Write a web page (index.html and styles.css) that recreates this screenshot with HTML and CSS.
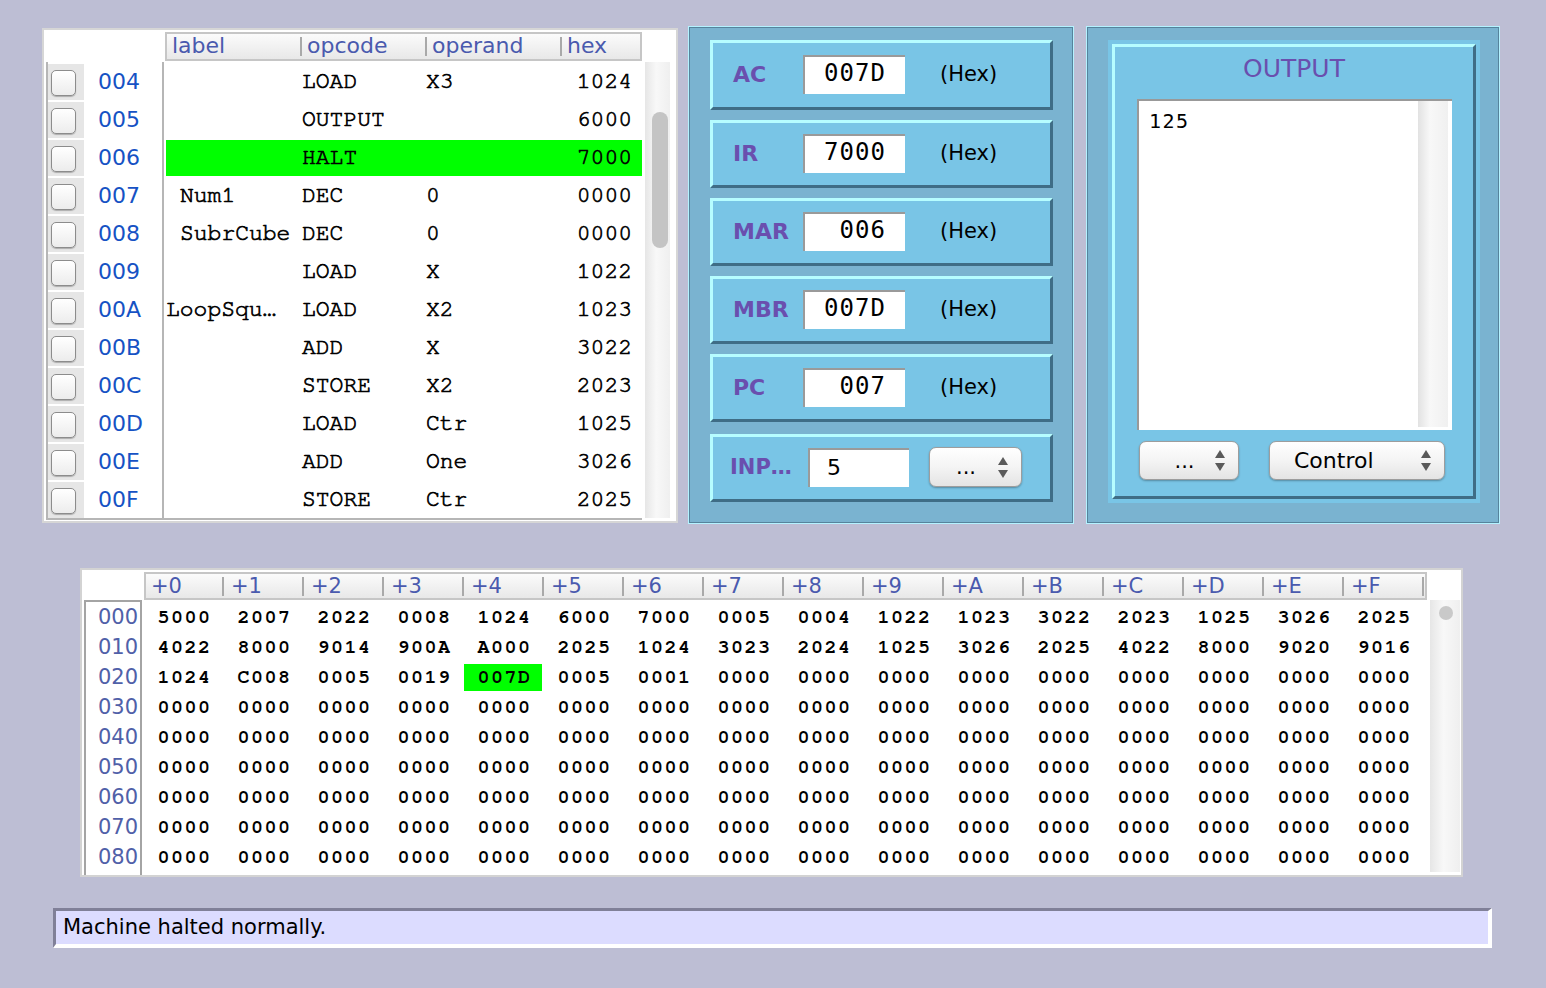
FILE: index.html
```html
<!DOCTYPE html>
<html>
<head>
<meta charset="utf-8">
<link rel="stylesheet" href="styles.css">
</head>
<body>
<div class="app">
  <div class="top">
    <section class="prog">
      <div class="prog-head">
        <div class="prog-head-spacer"></div>
        <div class="thead">
          <div class="th th-label">label</div>
          <div class="th th-op">opcode</div>
          <div class="th th-arg">operand</div>
          <div class="th th-hex">hex</div>
        </div>
      </div>
      <div class="prog-body">
        <div class="rows">
          <div class="row"><div class="chk"><span class="box"></span></div><div class="addr">004</div><div class="cells"><div class="cells-in"><div class="c-label"></div><div class="c-op">LOAD</div><div class="c-arg">X3</div><div class="c-hex">1024</div></div></div></div>
          <div class="row"><div class="chk"><span class="box"></span></div><div class="addr">005</div><div class="cells"><div class="cells-in"><div class="c-label"></div><div class="c-op">OUTPUT</div><div class="c-arg"></div><div class="c-hex">6000</div></div></div></div>
          <div class="row"><div class="chk"><span class="box"></span></div><div class="addr">006</div><div class="cells"><div class="cells-in hi"><div class="c-label"></div><div class="c-op">HALT</div><div class="c-arg"></div><div class="c-hex">7000</div></div></div></div>
          <div class="row"><div class="chk"><span class="box"></span></div><div class="addr">007</div><div class="cells"><div class="cells-in"><div class="c-label">Num1</div><div class="c-op">DEC</div><div class="c-arg">0</div><div class="c-hex">0000</div></div></div></div>
          <div class="row"><div class="chk"><span class="box"></span></div><div class="addr">008</div><div class="cells"><div class="cells-in"><div class="c-label">SubrCube</div><div class="c-op">DEC</div><div class="c-arg">0</div><div class="c-hex">0000</div></div></div></div>
          <div class="row"><div class="chk"><span class="box"></span></div><div class="addr">009</div><div class="cells"><div class="cells-in"><div class="c-label"></div><div class="c-op">LOAD</div><div class="c-arg">X</div><div class="c-hex">1022</div></div></div></div>
          <div class="row"><div class="chk"><span class="box"></span></div><div class="addr">00A</div><div class="cells"><div class="cells-in"><div class="c-label c-label-trunc">LoopSqu…</div><div class="c-op">LOAD</div><div class="c-arg">X2</div><div class="c-hex">1023</div></div></div></div>
          <div class="row"><div class="chk"><span class="box"></span></div><div class="addr">00B</div><div class="cells"><div class="cells-in"><div class="c-label"></div><div class="c-op">ADD</div><div class="c-arg">X</div><div class="c-hex">3022</div></div></div></div>
          <div class="row"><div class="chk"><span class="box"></span></div><div class="addr">00C</div><div class="cells"><div class="cells-in"><div class="c-label"></div><div class="c-op">STORE</div><div class="c-arg">X2</div><div class="c-hex">2023</div></div></div></div>
          <div class="row"><div class="chk"><span class="box"></span></div><div class="addr">00D</div><div class="cells"><div class="cells-in"><div class="c-label"></div><div class="c-op">LOAD</div><div class="c-arg">Ctr</div><div class="c-hex">1025</div></div></div></div>
          <div class="row"><div class="chk"><span class="box"></span></div><div class="addr">00E</div><div class="cells"><div class="cells-in"><div class="c-label"></div><div class="c-op">ADD</div><div class="c-arg">One</div><div class="c-hex">3026</div></div></div></div>
          <div class="row"><div class="chk"><span class="box"></span></div><div class="addr">00F</div><div class="cells"><div class="cells-in"><div class="c-label"></div><div class="c-op">STORE</div><div class="c-arg">Ctr</div><div class="c-hex">2025</div></div></div></div>
        </div>
        <div class="vscroll"><div class="vthumb"></div></div>
      </div>
    </section>

    <section class="regs">
      <div class="reg reg-ac"><div class="reg-label">AC</div><div class="field">007D</div><div class="hex-note">(Hex)</div></div>
      <div class="reg"><div class="reg-label">IR</div><div class="field">7000</div><div class="hex-note">(Hex)</div></div>
      <div class="reg"><div class="reg-label">MAR</div><div class="field"> 006</div><div class="hex-note">(Hex)</div></div>
      <div class="reg"><div class="reg-label">MBR</div><div class="field">007D</div><div class="hex-note">(Hex)</div></div>
      <div class="reg"><div class="reg-label">PC</div><div class="field"> 007</div><div class="hex-note">(Hex)</div></div>
      <div class="reg reg-inp"><div class="reg-label">INP…</div><div class="field field-inp">5</div>
        <div class="popup popup-inp"><span class="popup-text">...</span><svg class="arrows" width="10" height="21" viewBox="0 0 10 21"><path d="M0 8 L5 0 L10 8 Z" fill="#5a5a5a"/><path d="M0 13 L10 13 L5 21 Z" fill="#5a5a5a"/></svg></div>
      </div>
    </section>

    <section class="out">
      <div class="out-wrap">
        <div class="out-box">
          <div class="out-title">OUTPUT</div>
          <div class="out-text">
            <div class="out-content">125</div>
            <div class="out-track"></div>
          </div>
          <div class="out-buttons">
            <div class="popup popup-dots"><span class="popup-text">...</span><svg class="arrows" width="10" height="21" viewBox="0 0 10 21"><path d="M0 8 L5 0 L10 8 Z" fill="#5a5a5a"/><path d="M0 13 L10 13 L5 21 Z" fill="#5a5a5a"/></svg></div>
            <div class="popup popup-control"><span class="popup-text">Control</span><svg class="arrows" width="10" height="21" viewBox="0 0 10 21"><path d="M0 8 L5 0 L10 8 Z" fill="#5a5a5a"/><path d="M0 13 L10 13 L5 21 Z" fill="#5a5a5a"/></svg></div>
          </div>
        </div>
      </div>
    </section>
  </div>

  <section class="mem">
    <div class="mem-head">
      <div class="mh mh-first">+0</div><div class="mh">+1</div><div class="mh">+2</div><div class="mh">+3</div><div class="mh">+4</div><div class="mh">+5</div><div class="mh">+6</div><div class="mh">+7</div><div class="mh">+8</div><div class="mh">+9</div><div class="mh">+A</div><div class="mh">+B</div><div class="mh">+C</div><div class="mh">+D</div><div class="mh">+E</div><div class="mh">+F</div>
    </div>
    <div class="mem-body">
      <div class="mem-addr">
        <div class="ma">000</div><div class="ma">010</div><div class="ma">020</div><div class="ma">030</div><div class="ma">040</div><div class="ma">050</div><div class="ma">060</div><div class="ma">070</div><div class="ma">080</div>
      </div>
      <div class="mem-grid">
        <div class="mrow"><span class="mc">5000</span><span class="mc">2007</span><span class="mc">2022</span><span class="mc">0008</span><span class="mc">1024</span><span class="mc">6000</span><span class="mc">7000</span><span class="mc">0005</span><span class="mc">0004</span><span class="mc">1022</span><span class="mc">1023</span><span class="mc">3022</span><span class="mc">2023</span><span class="mc">1025</span><span class="mc">3026</span><span class="mc">2025</span></div>
        <div class="mrow"><span class="mc">4022</span><span class="mc">8000</span><span class="mc">9014</span><span class="mc">900A</span><span class="mc">A000</span><span class="mc">2025</span><span class="mc">1024</span><span class="mc">3023</span><span class="mc">2024</span><span class="mc">1025</span><span class="mc">3026</span><span class="mc">2025</span><span class="mc">4022</span><span class="mc">8000</span><span class="mc">9020</span><span class="mc">9016</span></div>
        <div class="mrow"><span class="mc">1024</span><span class="mc">C008</span><span class="mc">0005</span><span class="mc">0019</span><span class="mc mc-hi">007D</span><span class="mc">0005</span><span class="mc">0001</span><span class="mc">0000</span><span class="mc">0000</span><span class="mc">0000</span><span class="mc">0000</span><span class="mc">0000</span><span class="mc">0000</span><span class="mc">0000</span><span class="mc">0000</span><span class="mc">0000</span></div>
        <div class="mrow"><span class="mc">0000</span><span class="mc">0000</span><span class="mc">0000</span><span class="mc">0000</span><span class="mc">0000</span><span class="mc">0000</span><span class="mc">0000</span><span class="mc">0000</span><span class="mc">0000</span><span class="mc">0000</span><span class="mc">0000</span><span class="mc">0000</span><span class="mc">0000</span><span class="mc">0000</span><span class="mc">0000</span><span class="mc">0000</span></div>
        <div class="mrow"><span class="mc">0000</span><span class="mc">0000</span><span class="mc">0000</span><span class="mc">0000</span><span class="mc">0000</span><span class="mc">0000</span><span class="mc">0000</span><span class="mc">0000</span><span class="mc">0000</span><span class="mc">0000</span><span class="mc">0000</span><span class="mc">0000</span><span class="mc">0000</span><span class="mc">0000</span><span class="mc">0000</span><span class="mc">0000</span></div>
        <div class="mrow"><span class="mc">0000</span><span class="mc">0000</span><span class="mc">0000</span><span class="mc">0000</span><span class="mc">0000</span><span class="mc">0000</span><span class="mc">0000</span><span class="mc">0000</span><span class="mc">0000</span><span class="mc">0000</span><span class="mc">0000</span><span class="mc">0000</span><span class="mc">0000</span><span class="mc">0000</span><span class="mc">0000</span><span class="mc">0000</span></div>
        <div class="mrow"><span class="mc">0000</span><span class="mc">0000</span><span class="mc">0000</span><span class="mc">0000</span><span class="mc">0000</span><span class="mc">0000</span><span class="mc">0000</span><span class="mc">0000</span><span class="mc">0000</span><span class="mc">0000</span><span class="mc">0000</span><span class="mc">0000</span><span class="mc">0000</span><span class="mc">0000</span><span class="mc">0000</span><span class="mc">0000</span></div>
        <div class="mrow"><span class="mc">0000</span><span class="mc">0000</span><span class="mc">0000</span><span class="mc">0000</span><span class="mc">0000</span><span class="mc">0000</span><span class="mc">0000</span><span class="mc">0000</span><span class="mc">0000</span><span class="mc">0000</span><span class="mc">0000</span><span class="mc">0000</span><span class="mc">0000</span><span class="mc">0000</span><span class="mc">0000</span><span class="mc">0000</span></div>
        <div class="mrow"><span class="mc">0000</span><span class="mc">0000</span><span class="mc">0000</span><span class="mc">0000</span><span class="mc">0000</span><span class="mc">0000</span><span class="mc">0000</span><span class="mc">0000</span><span class="mc">0000</span><span class="mc">0000</span><span class="mc">0000</span><span class="mc">0000</span><span class="mc">0000</span><span class="mc">0000</span><span class="mc">0000</span><span class="mc">0000</span></div>
      </div>
      <div class="mem-track"><div class="mem-knob"></div></div>
    </div>
  </section>

  <div class="status">Machine halted normally.</div>
</div>
</body>
</html>
```

FILE: styles.css
```css
* { box-sizing: border-box; }
html, body { margin: 0; padding: 0; }
body {
  background: #bdbed4;
  width: 1546px;
  height: 988px;
  overflow: hidden;
  font-family: "DejaVu Sans", sans-serif;
  color: #000;
}
.app { padding-top: 26px; }
.top { display: flex; align-items: flex-start; padding-left: 42px; height: 498px; }

/* ---------- program panel ---------- */
.prog {
  margin-top: 2px;
  width: 636px;
  height: 495px;
  background: #fff;
  border: 2px solid #d6d6d6;
  margin-right: 10px;
  display: flex;
  flex-direction: column;
}
.prog-head { display: flex; padding-top: 2px; height: 32px; }
.prog-head-spacer { width: 121px; flex: none; }
.thead {
  display: flex;
  width: 477px;
  height: 29px;
  border: 2px solid #c6c6c6;
  background: linear-gradient(#fbfbfb, #e8e8e8);
}
.th {
  font-size: 22px;
  line-height: 24px;
  color: #4a5aae;
  padding-left: 7px;
  background: linear-gradient(#a9a9a9, #a9a9a9) 0 50% / 2px 19px no-repeat;
}
.th-label { width: 133px; padding-left: 5px; background: none; }
.th-op { width: 125px; }
.th-arg { width: 135px; }
.th-hex { width: 80px; }

.prog-body { display: flex; margin-left: 2px; height: 458px; }
.rows {
  width: 596px;
  border-left: 2px solid #b6b6b6;
  border-bottom: 2px solid #b6b6b6;
}
.row { display: flex; height: 38px; }
.chk {
  width: 36px;
  flex: none;
  background: #e6e6e6;
  border-top: 2px solid #fff;
  padding: 6px 0 0 3px;
}
.box {
  display: block;
  width: 25px;
  height: 26px;
  border-radius: 5px;
  border: 1px solid #8c8c8c;
  background: linear-gradient(#ffffff, #ececec);
  box-shadow: 0 1px 1px rgba(0,0,0,0.25);
}
.addr {
  width: 80px;
  flex: none;
  padding: 1px 0 0 14px;
  font-size: 22px;
  line-height: 38px;
  color: #1652c4;
  border-right: 2px solid #b6b6b6;
}
.cells { width: 478px; padding: 2px 0 0 2px; }
.cells-in {
  display: flex;
  height: 36px;
  line-height: 36px;
  font-family: "Nimbus Mono PS", "Nimbus Mono L", "FreeMono", "Courier", "Liberation Mono", monospace;
  font-size: 23px;
  -webkit-text-stroke: 0.7px #000;
  white-space: pre;
}
.cells-in.hi { background: #00ff00; }
.c-label { width: 134px; padding-left: 14px; }
.c-label-trunc { padding-left: 0; }
.c-op { width: 125px; padding-left: 2px; }
.c-arg { width: 135px; padding-left: 1px; }
.c-hex { width: 82px; text-align: right; padding-right: 10px; }

.vscroll {
  width: 25px;
  margin-left: 3px;
  height: 456px;
  background: linear-gradient(90deg, #e6e6e6, #f8f8f8 45%, #efefef);
  padding: 50px 2px 0 7px;
}
.vthumb { width: 16px; height: 136px; border-radius: 8px; background: #c4c4c4; }

/* ---------- registers ---------- */
.regs, .out {
  height: 498px;
  background: #7ab3d0;
  border: 1px solid #b4f2ff;
  box-shadow: inset 1px 1px 0 #56849c, inset -1px -1px 0 #56849c;
}
.regs {
  width: 386px;
  padding: 13px 20px 0 21px;
  margin-right: 12px;
  display: flex;
  flex-direction: column;
}
.reg {
  height: 68px;
  flex: none;
  margin-top: 10px;
  border: 3px solid;
  border-color: #b6fdff #3f6d86 #3f6d86 #b6fdff;
  background: #79c5e6;
  display: flex;
  align-items: center;
  padding: 0 0 2px 20px;
}
.reg-ac { margin-top: 0; height: 70px; }
.reg-inp { margin-top: 12px; padding-left: 17px; }
.reg-label {
  width: 70px;
  flex: none;
  font-size: 22px;
  font-weight: bold;
  color: #6a4fae;
}
.reg-inp .reg-label { width: 78px; font-size: 21px; }
.field {
  width: 102px;
  height: 39px;
  flex: none;
  background: #fff;
  border-top: 2px solid #9a9a9a;
  border-left: 2px solid #9a9a9a;
  font-family: "DejaVu Sans Mono", monospace;
  font-size: 24px;
  line-height: 33px;
  letter-spacing: 1px;
  text-align: center;
  white-space: pre;
}
.field-inp {
  width: 101px;
  text-align: left;
  padding-left: 17px;
  font-family: "DejaVu Sans", sans-serif;
  font-size: 22px;
  line-height: 35px;
  letter-spacing: 0;
}
.hex-note { margin-left: 35px; font-size: 21px; }

.popup {
  display: flex;
  align-items: center;
  height: 40px;
  border-radius: 7px;
  border: 1px solid #9d9d9d;
  background: linear-gradient(#ffffff, #f4f4f4 50%, #e4e4e4);
  box-shadow: 0 1px 2px rgba(0,0,0,0.3);
  font-size: 21px;
}
.popup-text { flex: 1; text-align: center; }
.arrows { flex: none; margin-right: 13px; }
.popup-inp { width: 93px; margin-left: 20px; }
.popup-inp .popup-text { padding-left: 4px; }

/* ---------- output ---------- */
.out { width: 414px; padding: 13px 19px 0 21px; }
.out-wrap { background: #79c5e6; padding: 4px; width: 372px; height: 463px; }
.out-box {
  height: 455px;
  border: 3px solid;
  border-color: #b6fdff #3f6d86 #3f6d86 #b6fdff;
  background: #79c5e6;
  display: flex;
  flex-direction: column;
}
.out-title {
  margin-top: 7px;
  height: 30px;
  line-height: 30px;
  text-align: center;
  font-size: 25px;
  color: #6a4fae;
}
.out-text {
  margin: 15px 0 0 22px;
  width: 315px;
  height: 331px;
  background: #fff;
  border-top: 2px solid #999;
  border-left: 2px solid #999;
  display: flex;
}
.out-content {
  flex: 1;
  padding: 8px 0 0 10px;
  font-family: "DejaVu Sans Mono", monospace;
  font-size: 20px;
  line-height: 24px;
  letter-spacing: 1.5px;
}
.out-track {
  width: 30px;
  height: 326px;
  margin-right: 4px;
  background: linear-gradient(90deg, #e2e2e2, #f8f8f8 40%, #f0f0f0);
}
.out-buttons { display: flex; margin: 11px 0 0 24px; gap: 30px; }
.popup-dots { width: 100px; height: 39px; }
.popup-dots .popup-text { padding-left: 14px; }
.popup-control { width: 176px; height: 39px; }
.popup-control .popup-text { text-align: left; padding-left: 24px; font-size: 22px; }

/* ---------- memory ---------- */
.mem {
  margin: 44px 0 0 80px;
  width: 1383px;
  height: 309px;
  background: #fff;
  border: 2px solid #d3d3d3;
  padding-top: 2px;
}
.mem-head {
  display: flex;
  margin-left: 62px;
  width: 1283px;
  height: 28px;
  border: 2px solid #c6c6c6;
  background: linear-gradient(#fbfbfb, #e8e8e8);
}
.mh {
  width: 80px;
  flex: none;
  padding-left: 7px;
  font-size: 21px;
  line-height: 24px;
  color: #4a5aae;
  background: linear-gradient(#a9a9a9, #a9a9a9) 100% 50% / 2px 19px no-repeat;
}
.mh-first { width: 78px; padding-left: 5px; }
.mem-body { display: flex; }
.mem-addr {
  margin-left: 2px;
  width: 58px;
  height: 275px;
  border: 2px solid #a4a4a4;
  border-bottom: none;
  flex: none;
}
.ma {
  height: 30px;
  line-height: 30px;
  text-align: right;
  padding-right: 2px;
  font-size: 21px;
  color: #5060a8;
}
.mem-grid { margin-left: 2px; padding-top: 2px; width: 1280px; flex: none; }
.mrow { display: flex; height: 30px; }
.mc {
  display: block;
  width: 78px;
  height: 27px;
  margin: 2px 2px 0 0;
  line-height: 27px;
  text-align: center;
  padding-left: 3px;
  font-family: "Nimbus Mono PS", "Nimbus Mono L", "FreeMono", "Courier", "Liberation Mono", monospace;
  font-weight: bold;
  font-size: 20px;
  letter-spacing: 1.5px;
}
.mc-hi { background: #00ff00; }
.mem-track {
  margin-left: 6px;
  width: 30px;
  height: 272px;
  background: linear-gradient(90deg, #e6e6e6, #f8f8f8 45%, #efefef);
  padding: 6px 0 0 9px;
}
.mem-knob { width: 14px; height: 14px; border-radius: 50%; background: #c9c9c9; }

/* ---------- status ---------- */
.status {
  margin: 31px 0 0 53px;
  width: 1439px;
  height: 40px;
  background: #dcdcff;
  border-top: 3px solid #808098;
  border-left: 3px solid #808098;
  border-right: 4px solid #fff;
  border-bottom: 4px solid #fff;
  padding-left: 7px;
  font-size: 21px;
  line-height: 33px;
}
```
